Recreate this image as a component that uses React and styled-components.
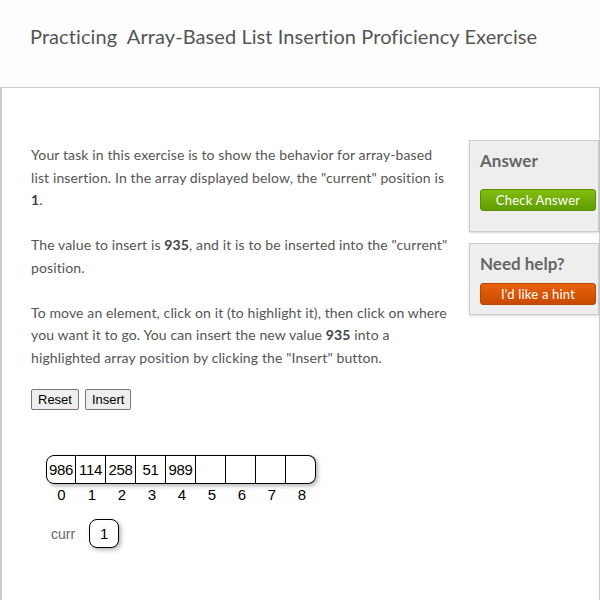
import React from "react";
import styled, { createGlobalStyle } from "styled-components";

const values = [986, 114, 258, 51, 989, "", "", "", ""];

const App = () => {
  return (
    <>
      <GlobalStyle />
      <Header>
        <Title>Practicing&nbsp; Array-Based List Insertion Proficiency Exercise</Title>
      </Header>
      <Panel>
        <Main>
          <Para>
            Your task in this exercise is to show the behavior for array-based
            list insertion. In the array displayed below, the "current" position is{" "}
            <b>1</b>.
          </Para>
          <Para>
            The value to insert is <b>935</b>, and it is to be inserted into the "current"
            position.
          </Para>
          <Para>
            To move an element, click on it (to highlight it), then click on where
            you want it to go. You can insert the new value <b>935</b> into a
            highlighted array position by clicking the "Insert" button.
          </Para>
          <Controls>
            <PlainButton>Reset</PlainButton>
            <PlainButton>Insert</PlainButton>
          </Controls>
          <ArrayWrap>
            <ArrayRow>
              {values.map((v, i) => (
                <Cell key={i} $first={i === 0} $last={i === values.length - 1}>
                  {v}
                </Cell>
              ))}
            </ArrayRow>
            <IndexRow>
              {values.map((v, i) => (
                <Index key={i}>{i}</Index>
              ))}
            </IndexRow>
          </ArrayWrap>
          <CurrRow>
            <CurrLabel>curr</CurrLabel>
            <CurrBox>1</CurrBox>
          </CurrRow>
        </Main>
        <Side>
          <SideBox $height="92px">
            <SideTitle $gap="17px">Answer</SideTitle>
            <ActionButton $color="green">Check Answer</ActionButton>
          </SideBox>
          <SideBox $height="72px">
            <SideTitle $gap="8px">Need help?</SideTitle>
            <ActionButton $color="orange">I'd like a hint</ActionButton>
          </SideBox>
        </Side>
      </Panel>
    </>
  );
};

export default App;

const GlobalStyle = createGlobalStyle`
  body {
    margin: 0;
    background: #fdfdfd;
    font-family: Lato, "Open Sans", sans-serif;
    color: #555;
    overflow: hidden;
  }
`;

const Header = styled.div`
  height: 87px;
  padding: 24px 0 0 30px;
  box-sizing: border-box;
`;

const Title = styled.h1`
  margin: 0;
  font-weight: 400;
  font-size: 20px;
  letter-spacing: 0.08px;
  color: #555;
  white-space: nowrap;
`;

const Panel = styled.div`
  display: flex;
  width: 600px;
  box-sizing: border-box;
  border-top: 1px solid #ccc;
  border-left: 2px solid #ccc;
  border-right: 1px solid #ccc;
  background: #fff;
  height: 600px;
`;

const Main = styled.div`
  width: 418px;
  padding: 56px 7px 0 29px;
  flex-shrink: 0;
`;

const Para = styled.p`
  margin: 0;
  font-size: 14px;
  letter-spacing: 0.12px;
  line-height: 22.5px;
  & + & {
    margin-top: 22.5px;
  }
  b {
    font-weight: 700;
    color: #444;
  }
`;

const Controls = styled.div`
  display: flex;
  gap: 6px;
  margin-top: 20px;
`;

const PlainButton = styled.button`
  font-family: "Liberation Sans", Arial, sans-serif;
  font-size: 13px;
  color: #000;
  background: #efefef;
  border: 1px solid #767676;
  border-radius: 2px;
  padding: 1px 6px;
  height: 21px;
`;

const ArrayWrap = styled.div`
  margin: 45px 0 0 15px;
  font-family: "Liberation Sans", Arial, sans-serif;
  color: #000;
`;

const ArrayRow = styled.div`
  display: flex;
  width: max-content;
  border-radius: 8px;
  box-shadow: 2px 2px 4px rgba(0, 0, 0, 0.3);
`;

const Cell = styled.div`
  width: 30px;
  height: 29px;
  box-sizing: border-box;
  border: 1px solid #000;
  border-left: ${(p) => (p.$first ? "1px solid #000" : "none")};
  border-radius: ${(p) =>
    p.$first ? "8px 0 0 8px" : p.$last ? "0 8px 8px 0" : "0"};
  background: #fff;
  display: flex;
  align-items: center;
  justify-content: center;
  font-size: 15px;
  letter-spacing: -0.3px;
`;

const IndexRow = styled.div`
  display: flex;
  margin-top: 2px;
`;

const Index = styled.div`
  width: 30px;
  text-align: center;
  font-size: 15px;
  &:first-child {
    width: 31px;
  }
`;

const CurrRow = styled.div`
  display: flex;
  align-items: center;
  margin: 16px 0 0 20px;
  gap: 14px;
`;

const CurrLabel = styled.span`
  font-family: "Liberation Sans", Arial, sans-serif;
  font-size: 14px;
  color: #666;
`;

const CurrBox = styled.div`
  width: 30px;
  height: 29px;
  box-sizing: border-box;
  border: 1px solid #000;
  border-radius: 8px;
  background: #fff;
  box-shadow: 2px 2px 4px rgba(0, 0, 0, 0.3);
  display: flex;
  align-items: center;
  justify-content: center;
  font-family: "Liberation Sans", Arial, sans-serif;
  font-size: 15px;
  color: #000;
`;

const Side = styled.div`
  padding: 52px 0 0 13px;
  flex: 1;
  display: flex;
  flex-direction: column;
  gap: 11px;
`;

const SideBox = styled.div`
  background: #eee;
  border: 1px solid #ccc;
  box-shadow: 0 1px 2px rgba(0, 0, 0, 0.15);
  padding: 9px 0 0 10px;
  height: ${(p) => p.$height};
  box-sizing: border-box;
`;

const SideTitle = styled.h2`
  margin: 0 0 ${(p) => p.$gap};
  font-size: 17px;
  font-weight: 700;
  color: #666;
  line-height: 22px;
`;

const ActionButton = styled.button`
  display: block;
  width: 116px;
  height: 22px;
  border-radius: 3px;
  font-family: Lato, sans-serif;
  font-size: 13px;
  letter-spacing: 0.2px;
  color: #fff;
  cursor: pointer;
  border: 1px solid
    ${(p) => (p.$color === "green" ? "#5b8f00" : "#b84500")};
  background: ${(p) =>
    p.$color === "green"
      ? "linear-gradient(#82bd0e, #5f9d00)"
      : "linear-gradient(#e8620c, #c84a00)"};
`;
